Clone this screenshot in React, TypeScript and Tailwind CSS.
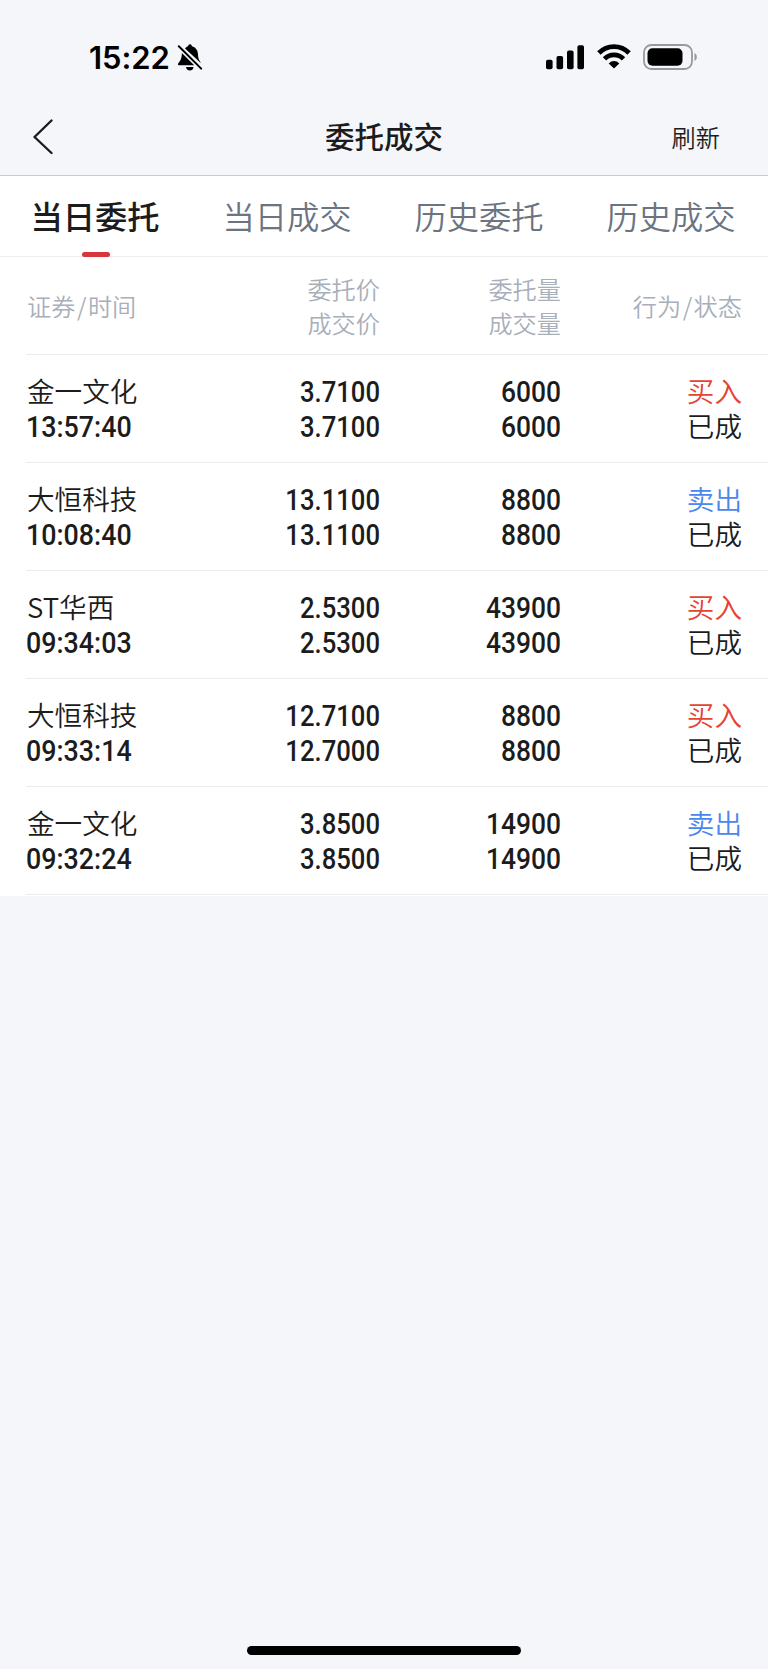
import { clsx } from 'clsx';

interface Order {
  name: string;
  time: string;
  price: string;
  dealPrice: string;
  amount: string;
  dealAmount: string;
  side: 'buy' | 'sell';
}

const tabs = ['当日委托', '当日成交', '历史委托', '历史成交'];

const orders: Order[] = [
  { name: '金一文化', time: '13:57:40', price: '3.7100', dealPrice: '3.7100', amount: '6000', dealAmount: '6000', side: 'buy' },
  { name: '大恒科技', time: '10:08:40', price: '13.1100', dealPrice: '13.1100', amount: '8800', dealAmount: '8800', side: 'sell' },
  { name: 'ST华西', time: '09:34:03', price: '2.5300', dealPrice: '2.5300', amount: '43900', dealAmount: '43900', side: 'buy' },
  { name: '大恒科技', time: '09:33:14', price: '12.7100', dealPrice: '12.7000', amount: '8800', dealAmount: '8800', side: 'buy' },
  { name: '金一文化', time: '09:32:24', price: '3.8500', dealPrice: '3.8500', amount: '14900', dealAmount: '14900', side: 'sell' },
];

function StatusBar() {
  return (
    <div className="flex h-[100px] items-center justify-between pt-[14px] pr-[70px] pl-[89px]">
      <div className="flex items-center">
        <span className="w-[88px] font-['Inter',sans-serif] text-[31px] leading-none font-[590] tracking-[-0.1px] whitespace-nowrap text-black">
          15:22
        </span>
        <svg width="26" height="28" viewBox="0 0 26 28" className="mt-px">
          <path d="M8 4.6C9 3 10 2.6 11 2.2C11.3 0.9 12 0.2 13 0.2S14.7 0.9 15 2.2C18.5 3.2 20.7 6 20.9 9.5C21 13.5 21.8 15.5 22.6 16.8L24 19.2Z" fill="#000" />
          <path d="M4.9 9L17.2 21.3H2C0.9 21.3 0.6 20.2 1.3 19.3C3.2 17.2 4.7 14.6 4.9 9Z" fill="#000" />
          <path d="M9 23H16.6C16.2 25.3 14.8 26.6 12.8 26.6S9.4 25.3 9 23Z" fill="#000" />
          <path d="M1.8 2.2L24.2 24.6" stroke="#000" strokeWidth="2" strokeLinecap="round" />
        </svg>
      </div>
      <div className="flex items-center">
        <svg width="40" height="25" viewBox="0 0 40 25">
          <rect x="1" y="14.8" width="6.6" height="9.4" rx="1.8" />
          <rect x="11.5" y="11" width="6.6" height="13.2" rx="1.8" />
          <rect x="22" y="5.6" width="6.6" height="18.6" rx="1.8" />
          <rect x="32.4" y="0.3" width="6.6" height="23.9" rx="1.8" />
        </svg>
        <svg width="34" height="25" viewBox="0 0 34 25" className="mb-px ml-3" fill="none" stroke="#000" strokeWidth="4.8">
          <path d="M1.9 9A21 21 0 0 1 32.1 9" />
          <path d="M7.5 14.9A13.2 13.2 0 0 1 26.5 14.9" />
          <path d="M11.7 19.4A7.3 7.3 0 0 1 22.3 19.4L17 24.6Z" fill="#000" stroke="none" />
        </svg>
        <svg width="55" height="26" viewBox="0 0 55 26" className="ml-3">
          <rect x="1" y="1" width="48" height="24" rx="7.5" fill="none" stroke="#98999d" strokeWidth="1.8" />
          <rect x="4.5" y="4.2" width="35" height="17.6" rx="5" />
          <path d="M51.5 9C54.6 10.2 54.6 15.8 51.5 17Z" fill="#98999d" />
        </svg>
      </div>
    </div>
  );
}

function NavBar() {
  return (
    <div className="grid h-[76px] grid-cols-3 items-center border-b border-[#c9cacd] pb-[2px] text-[#1c1c1c]">
      <button className="pl-[32px]" aria-label="返回">
        <svg width="22" height="36" viewBox="0 0 22 36" fill="none" stroke="currentColor" strokeWidth="2.4" strokeLinecap="round" strokeLinejoin="round">
          <path d="M19.5 1.5L2.5 18L19.5 34" />
        </svg>
      </button>
      <h1 className="pb-[4px] text-center text-[29.5px] leading-9 font-medium">委托成交</h1>
      <button className="pr-[48px] text-right text-[24.2px] leading-9 font-[350]">刷新</button>
    </div>
  );
}

function Tabs() {
  return (
    <div className="grid h-[81px] grid-cols-4 border-b border-[#ededed] bg-white">
      {tabs.map((tab, i) => (
        <button
          key={tab}
          className={clsx(
            'relative pr-[2px] pb-[2px] text-[32.3px] leading-none whitespace-nowrap',
            i === 0 ? 'font-medium text-[#1c1c1c]' : 'font-[350] text-[#6b7480]'
          )}
        >
          {tab}
          {i === 0 && <span className="absolute bottom-[-1px] left-[82px] h-[5px] w-7 rounded-full bg-[#d73539]" />}
        </button>
      ))}
    </div>
  );
}

const numStyles = {
  time: 'origin-left scale-x-[0.925]',
  price: 'origin-right scale-x-[0.885]',
  amount: 'origin-right scale-x-[0.91]',
};

function Num({ children, kind }: { children: string; kind: keyof typeof numStyles }) {
  return (
    <span className={clsx("block pt-[2px] font-['Roboto',sans-serif] text-[29px] leading-[33px] font-[460]", numStyles[kind])}>
      {children}
    </span>
  );
}

function Slash() {
  return <span className="mx-[1.5px]">/</span>;
}

function OrderRow({ order }: { order: Order }) {
  const buy = order.side === 'buy';
  return (
    <div className="ml-[26px] grid h-[108px] grid-cols-[174px_180px_181px_181px] content-center border-b border-[#ededed] text-right text-[27.6px] leading-[35px] text-[#1c1c1c]">
      <div className="text-left">
        <div className="-mt-px mb-px pl-px font-[350]">{order.name}</div>
        <Num kind="time">{order.time}</Num>
      </div>
      <div>
        <Num kind="price">{order.price}</Num>
        <Num kind="price">{order.dealPrice}</Num>
      </div>
      <div>
        <Num kind="amount">{order.amount}</Num>
        <Num kind="amount">{order.dealAmount}</Num>
      </div>
      <div className="-mt-px mb-px font-[350]">
        <div className={buy ? 'text-[#e64432]' : 'text-[#4a87ee]'}>{buy ? '买入' : '卖出'}</div>
        <div>已成</div>
      </div>
    </div>
  );
}

export default function App() {
  return (
    <div className="flex h-[1669px] w-[768px] flex-col bg-[#f4f6fa] font-['Noto_Sans_CJK_SC',sans-serif]">
      <StatusBar />
      <NavBar />
      <Tabs />
      <div className="bg-white pb-px">
        <div className="ml-[26px] grid h-[98px] grid-cols-[174px_180px_181px_181px] items-center border-b border-[#ededed] text-right text-[24.2px] leading-[33.5px] font-[350] text-[#a8afba]">
          <div className="pl-px text-left">
            证券
            <Slash />
            时间
          </div>
          <div>
            委托价
            <br />
            成交价
          </div>
          <div>
            委托量
            <br />
            成交量
          </div>
          <div>
            行为
            <Slash />
            状态
          </div>
        </div>
        {orders.map((order) => (
          <OrderRow key={order.time} order={order} />
        ))}
      </div>
      {/* home indicator */}
      <div className="mx-auto mt-auto mb-[14px] h-[9px] w-[274px] rounded-full bg-black" />
    </div>
  );
}
